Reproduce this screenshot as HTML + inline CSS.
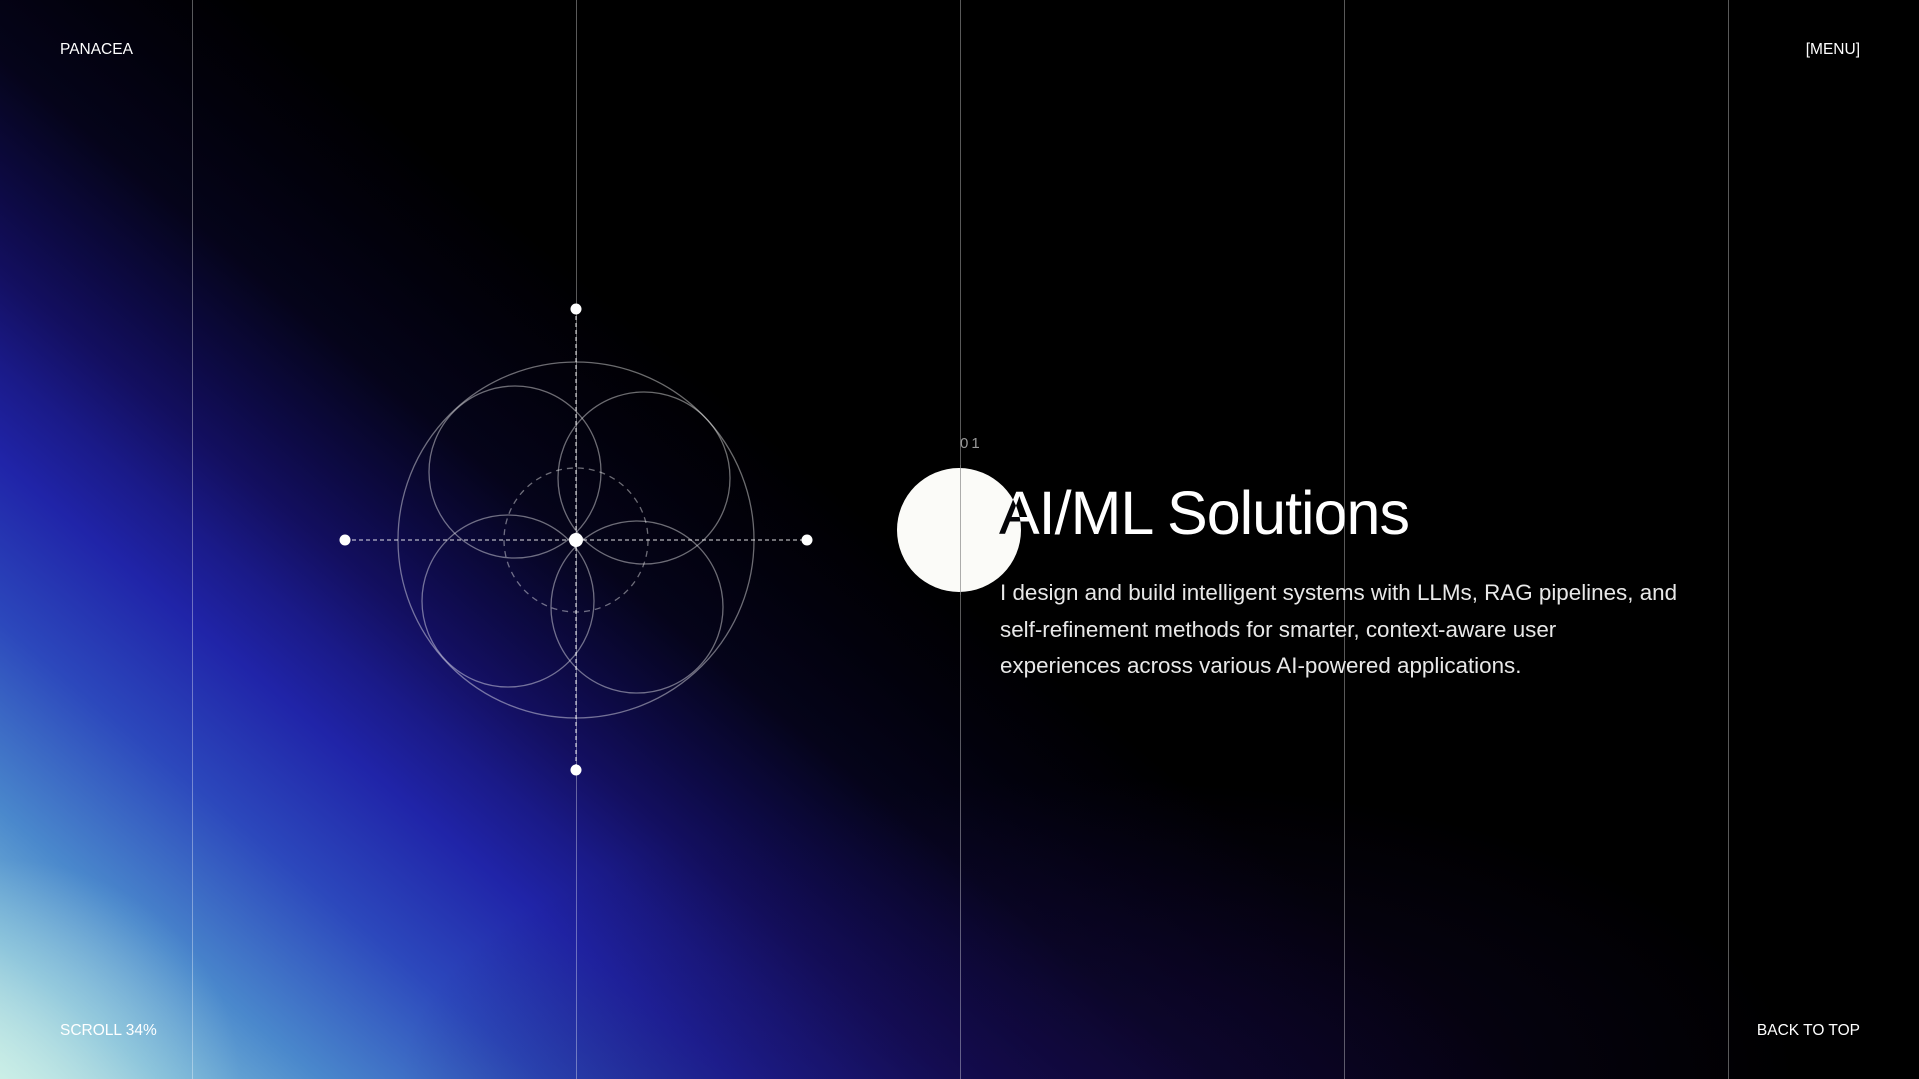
<!DOCTYPE html>
<html><head><meta charset="utf-8"><style>
html,body{margin:0;padding:0;width:1919px;height:1079px;overflow:hidden;background:#000;font-family:"Liberation Sans",sans-serif;color:#fff}
.bg{position:absolute;inset:0;background:
radial-gradient(ellipse 240px 220px at 0px 1079px, rgba(205,240,232,0.6), rgba(160,220,230,0) 100%),
radial-gradient(ellipse 700px 300px at 1100px 1079px, rgba(20,8,60,0.6), rgba(0,0,0,0) 100%),
linear-gradient(220deg,#000 0%,#000 52%,#02010c 57%,#05041a 62%,#0d0a45 67%,#130f60 70%,#1a1a88 73.5%,#2024a8 77%,#2c48bc 83%,#4a88cc 90%,#7ab8d8 95%,#c8ece4 100%);}
.vl{position:absolute;top:0;width:1px;height:1079px;background:rgba(255,255,255,0.35)}
.t{position:absolute;font-size:15.5px;letter-spacing:0}
</style></head><body>
<div class="bg"></div>
<div class="vl" style="left:192px"></div>
<div class="vl" style="left:576px"></div>
<div class="vl" style="left:960px"></div>
<div class="vl" style="left:1344px"></div>
<div class="vl" style="left:1728px"></div>
<div class="t" style="left:60px;top:41px">PANACEA</div>
<div class="t" style="right:59px;top:41px">[MENU]</div>
<div class="t" style="left:60px;top:1022px">SCROLL 34%</div>
<div class="t" style="right:59px;top:1022px">BACK TO TOP</div>
<svg width="1919" height="1079" style="position:absolute;left:0;top:0">
<g fill="none" stroke="rgba(255,255,255,0.42)" stroke-width="1.3">
<circle cx="576" cy="540" r="178"/>
<circle cx="515" cy="472" r="86"/>
<circle cx="644" cy="478" r="86"/>
<circle cx="508" cy="601" r="86"/>
<circle cx="637" cy="607" r="86"/>
<circle cx="576" cy="540" r="72" stroke-dasharray="6 5"/>
</g>
<g stroke="rgba(255,255,255,0.7)" stroke-width="1.3" stroke-dasharray="4 3">
<line x1="345" y1="540" x2="807" y2="540"/>
<line x1="576" y1="309" x2="576" y2="770"/>
</g>
<g fill="#fff">
<circle cx="576" cy="309" r="5.5"/><circle cx="576" cy="770" r="5.5"/>
<circle cx="345" cy="540" r="5.5"/><circle cx="807" cy="540" r="5.5"/>
<circle cx="576" cy="540" r="7"/>
</g>
</svg>
<div style="position:absolute;left:897px;top:468px;width:124px;height:124px;border-radius:50%;background:#fbfbf8"></div>
<div class="vl" style="left:960px;height:130px;top:465px;background:rgba(120,120,120,0.6)"></div>
<div style="position:absolute;left:960px;top:435px;font-size:15px;color:#999;letter-spacing:3px">01</div>
<div style="position:absolute;left:999px;top:478px;font-size:61px;letter-spacing:-1px;line-height:70px;white-space:nowrap;mix-blend-mode:difference;color:#fff">AI/ML Solutions</div>
<div style="position:absolute;left:1000px;top:575px;font-size:22.4px;line-height:36.5px;color:#e8e8e8;white-space:nowrap">I design and build intelligent systems with LLMs, RAG pipelines, and<br>self-refinement methods for smarter, context-aware user<br>experiences across various AI-powered applications.</div>
</body></html>
